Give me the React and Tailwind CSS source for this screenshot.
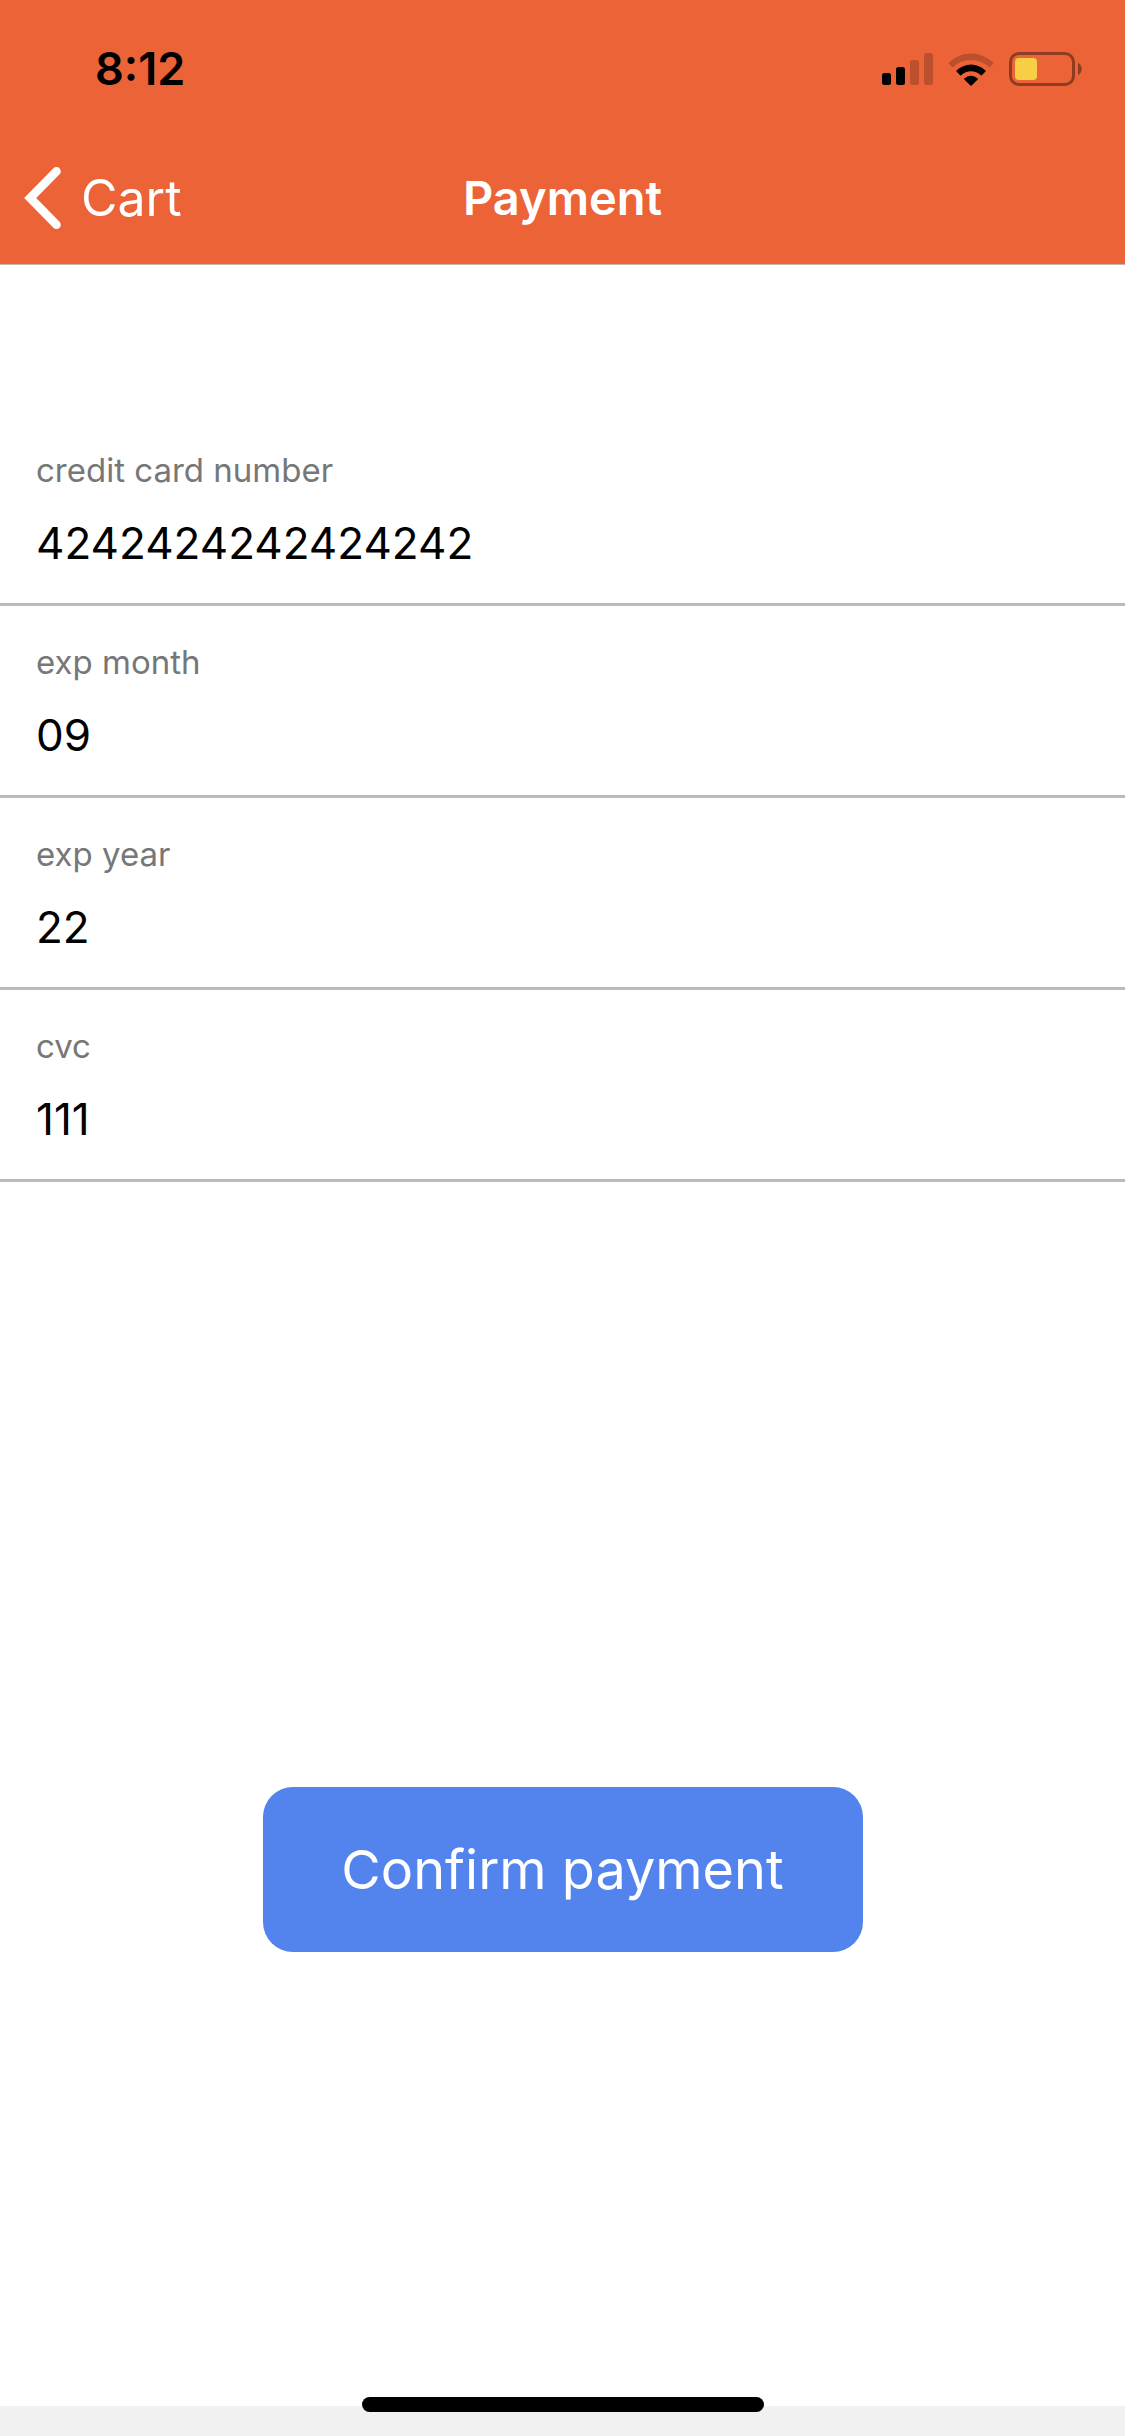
const FIELDS = [
  { id: "card-number", label: "credit card number", value: "4242424242424242" },
  { id: "exp-month", label: "exp month", value: "09" },
  { id: "exp-year", label: "exp year", value: "22" },
  { id: "cvc", label: "cvc", value: "111" },
];

function SignalIcon() {
  return (
    <svg width="51" height="32" viewBox="0 0 51 32" aria-hidden="true">
      <rect x="0" y="20" width="9" height="12" rx="2.5" />
      <rect x="14" y="14" width="9" height="18" rx="2.5" />
      <rect x="28" y="7" width="9" height="25" rx="2.5" fillOpacity="0.2" />
      <rect x="42" y="0" width="9" height="32" rx="2.5" fillOpacity="0.2" />
    </svg>
  );
}

function WifiIcon() {
  return (
    <svg width="46" height="33" viewBox="0 0 46 33" aria-hidden="true">
      <path
        d="M0.6 9.7 A32 32 0 0 1 45.4 9.7 Q45.8 10.2 45.4 10.6 L41.9 14.1 Q41.4 14.5 40.9 14.1 A26 26 0 0 0 5.1 14.1 Q4.6 14.5 4.1 14.1 L0.6 10.6 Q0.2 10.2 0.6 9.7 Z"
        fillOpacity="0.2"
      />
      <path d="M8.5 17.5 A20.8 20.8 0 0 1 37.5 17.5 Q38 18 37.5 18.5 L33.8 22.2 Q33.3 22.6 32.8 22.2 A14.2 14.2 0 0 0 13.2 22.2 Q12.7 22.6 12.2 22.2 L8.5 18.5 Q8 18 8.5 17.5 Z" />
      <path d="M16.3 25.4 A10 10 0 0 1 29.7 25.4 Q30.2 25.9 29.7 26.4 L23.6 32.4 Q23 33 22.4 32.4 L16.3 26.4 Q15.8 25.9 16.3 25.4 Z" />
    </svg>
  );
}

function BatteryIcon() {
  return (
    <svg width="73" height="34" viewBox="0 0 73 34" aria-hidden="true">
      <rect x="1.5" y="1.5" width="63" height="31" rx="8.5" fill="none" stroke="#8f3c22" strokeWidth="3" />
      <rect x="6" y="6" width="22" height="22" rx="4" fill="#f7ce46" />
      <path d="M69 11 C74 13 74 21 69 23 Z" fill="#8f3c22" />
    </svg>
  );
}

function BackIcon() {
  return (
    <svg width="37" height="62" viewBox="0 0 37 62" aria-hidden="true">
      <path d="M32.5 4.3 L6.2 31 L32.5 57.7" fill="none" stroke="white" strokeWidth="8.6" strokeLinecap="round" strokeLinejoin="miter" />
    </svg>
  );
}

function Field({ id, label, value }) {
  return (
    <div className="flex flex-col border-b-3 border-[#bbbbbb] px-9 pt-9 pb-7">
      <label htmlFor={id} className="text-[33px] leading-10 text-[#777777]">
        {label}
      </label>
      <input
        id={id}
        type="text"
        inputMode="numeric"
        defaultValue={value}
        className="mt-5 h-[65px] w-full bg-transparent text-[44px] text-black outline-none"
      />
    </div>
  );
}

export default function App() {
  return (
    <div className="flex min-h-screen flex-col bg-white font-['Inter',sans-serif]">
      <header className="border-b border-[#c4b5ae] bg-[#ec6337]">
        <div className="flex h-[132px] items-center justify-between pt-1.5 pr-[43px] pl-[95px]">
          <span className="text-[45px] font-semibold text-black">8:12</span>
          <div className="flex items-center gap-[15px]">
            <SignalIcon />
            <WifiIcon />
            <BatteryIcon />
          </div>
        </div>
        <div className="grid h-[132px] grid-cols-[1fr_auto_1fr] items-center px-6">
          <button type="button" className="flex items-center gap-5 justify-self-start text-[50px] text-white">
            <BackIcon />
            Cart
          </button>
          <h1 className="text-[47px] font-semibold text-white">Payment</h1>
        </div>
      </header>

      <form className="flex flex-1 flex-col pt-[149px]">
        {FIELDS.map((field) => (
          <Field key={field.id} {...field} />
        ))}
        <div className="flex-4" />
        <button
          type="button"
          className="w-[600px] max-w-full self-center rounded-[30px] bg-[#5384ed] py-12 text-[54px] leading-[69px] text-white"
        >
          Confirm payment
        </button>
        <div className="flex-3" />
      </form>

      <footer className="relative h-[30px] bg-[#f1f1f1]">
        <div className="absolute bottom-6 left-1/2 h-[15px] w-[402px] -translate-x-1/2 rounded-full bg-black" />
      </footer>
    </div>
  );
}
